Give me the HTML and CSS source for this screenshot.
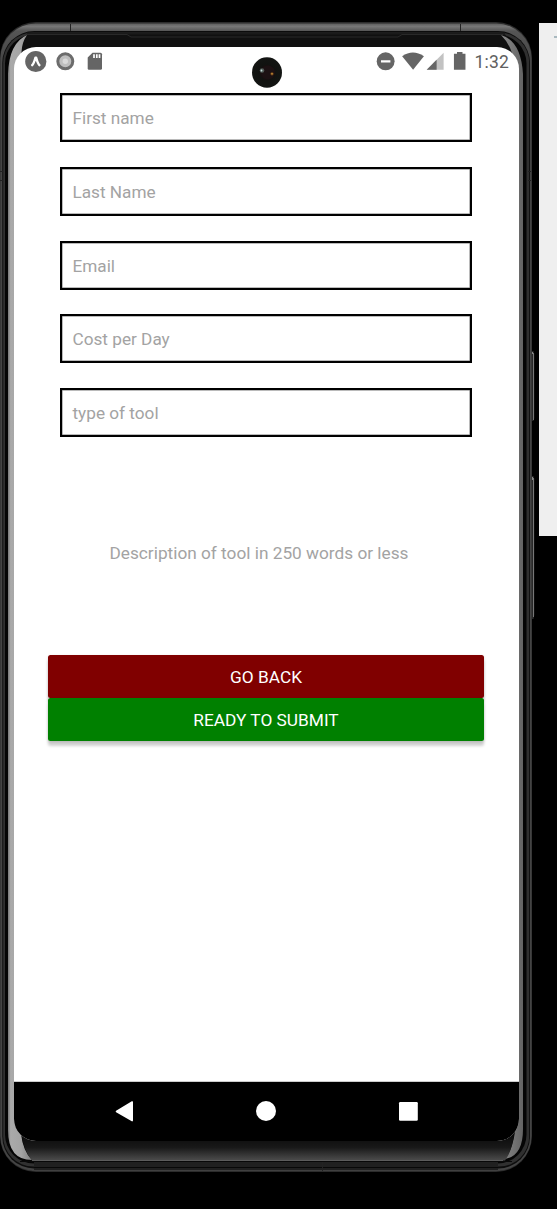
FILE: index.html
```html
<!DOCTYPE html>
<html lang="en">
<head>
<meta charset="utf-8">
<title>Tool listing</title>
<link rel="stylesheet" href="styles.css">
</head>
<body>
<div class="desktop">
  <svg class="bezel" width="557" height="1209" viewBox="0 0 557 1209" aria-hidden="true">
    <defs>
      <linearGradient id="rim" gradientUnits="userSpaceOnUse" x1="0" y1="23" x2="0" y2="90"><stop offset="0" stop-color="#555"/><stop offset=".05" stop-color="#777"/><stop offset=".12" stop-color="#555"/><stop offset=".5" stop-color="#484848"/><stop offset="1" stop-color="#444"/></linearGradient>
      <linearGradient id="chin" x1="0" y1="0" x2="0" y2="1"><stop offset="0" stop-color="#0a0a0a"/><stop offset=".5" stop-color="#181818"/><stop offset="1" stop-color="#4c4c4c"/></linearGradient>
      <linearGradient id="shineL" gradientUnits="userSpaceOnUse" x1="8" y1="0" x2="30" y2="0"><stop offset="0" stop-color="#777"/><stop offset=".12" stop-color="#aaa"/><stop offset=".6" stop-color="#a4a4a4"/><stop offset="1" stop-color="#858585"/></linearGradient>
      <linearGradient id="shineR" gradientUnits="userSpaceOnUse" x1="500" y1="0" x2="523" y2="0"><stop offset="0" stop-color="#8a8a8a"/><stop offset="1" stop-color="#646464"/></linearGradient>
      <radialGradient id="lens"><stop offset="0" stop-color="#2a1518"/><stop offset=".45" stop-color="#171010"/><stop offset=".5" stop-color="#111210"/><stop offset="1" stop-color="#131513"/></radialGradient>
    </defs>
    <path fill="#efefef" d="M539 23h18v513h-18z"/>
    <path fill="#a9b9bf" d="M554 36h3v2h-3z"/>
    <path fill="#282828" d="M531 351h2.500l.8 3v64l-.8 3H531zM531 476h2.500l.8 3v136l-.8 4H531z"/>
    <path fill="none" stroke="#777" d="M533.500 353v67M533.500 478v139"/>
    <path fill="#888" d="M531 352h2v2h-2zM531 477h2v3h-2z"/>
    <rect x="0" y="22" width="532" height="1150" rx="36" fill="#2c2c2c"/>
    <rect x=".5" y="23.500" width="531" height="1147.500" rx="35" fill="url(#rim)"/>
    <rect x="2.300" y="31" width="527.700" height="1137.500" rx="32" fill="#0c0c0c"/>
    <rect x="3.200" y="32.500" width="526" height="1134" rx="30" fill="#303030"/>
    <rect x="5" y="34.500" width="521.500" height="1129" rx="29" fill="#050505"/>
    <path fill="#1a1a1a" d="M27 32.500h478v2H27z"/>
    <path fill="#101010" d="M27 34.500h478q8 7 10 18v10H17V52q2-12 10-17.500z"/>
    <path fill="none" stroke="#292929" d="M27 34.500h100l4 2.500h267l4-2.500h101"/>
    <path fill="url(#shineL)" d="M8 74Q9 43 27 35 22 42 21.500 52L17 66V1120l4 14q2 17 11 26Q8 1160 8 1130z"/>
    <path fill="url(#shineR)" d="M523 74Q521 41 501 35q8 8 11 18l4 13V1120l-1 12q-3 19-10 27 18-3 18-30z"/>
    <path fill="url(#chin)" d="M21.500 1134H514q-2 17-9 26.500H32q-8-9-10.500-26.500z"/>
    <path fill="none" stroke="#5c5c5c" d="M32 1160.500H503"/>
    <path fill="#202020" d="M34 1161H498v9H34z"/>
    <path fill="none" stroke="#080808" d="M20 1161.500H512M34 1167.500H498"/>
    <path fill="none" stroke="#404040" d="M32 1170.500H500"/>
    <path fill="none" stroke="#222" d="M70.500 24v7M460.500 24v7M322.500 1162v9M0 171.500h3M0 180.500h3M528 171.500h3M528 180.500h3"/>
  </svg>
  <main class="screen">
    <header class="status">
      <svg width="80" height="24" viewBox="25 50 80 24" aria-hidden="true">
        <circle cx="35.800" cy="61.500" r="10.600" fill="#656565"/>
        <path d="M32.200 65.200q1.600-1.500 3.200-7.400h.8q1.600 5.900 3.200 7.400" fill="none" stroke="#fff" stroke-width="2.400" stroke-linecap="round" stroke-linejoin="round"/>
        <circle cx="65.300" cy="61.300" r="7.500" fill="#bebebe" stroke="#6c6c6c" stroke-width="3"/>
        <circle cx="65.300" cy="61.300" r="2.700" fill="#d9d9d9"/>
        <path fill="#656565" d="M92.500 52.800h8q1.500 0 1.500 1.500v14q0 1.500-1.500 1.500H89q-1.300 0-1.300-1.500V57.600z"/>
        <path stroke="#fff" stroke-width="1.700" d="M94 54.300v3.700M96.800 54.300v3.700M99.500 54.300v3.700"/>
      </svg>
      <svg class="camera" width="30" height="31" viewBox="0 0 30 31" aria-hidden="true"><ellipse cx="15" cy="15.500" rx="15" ry="15.300" fill="url(#lens)"/><circle cx="16" cy="15.500" r="7" fill="#1c1113"/><circle cx="10" cy="13.500" r="2.300" fill="#525c58"/><circle cx="9.500" cy="13.500" r=".9" fill="#c8e0df"/><circle cx="20" cy="16.800" r="1.600" fill="#744a17"/><circle cx="20" cy="16.800" r=".7" fill="#e0a34b"/></svg>
      <div class="system">
        <svg width="92" height="24" viewBox="376 50 92 24" aria-hidden="true">
          <circle cx="385.700" cy="61.300" r="9" fill="#656565"/><path stroke="#fff" stroke-width="2.200" d="M381 61.300h9.500"/>
          <path fill="#656565" d="M402.300 56.300Q413 48.700 424.200 56.300L413.300 69.800z"/>
          <path fill="#c2c2c2" d="M444 52.800v17h-17z"/><path fill="#656565" d="M437 59.800v10h-10z"/>
          <path fill="#656565" d="M457.500 52h5.500v1.700h3V69.900h-11.600V53.700h3.100z"/>
        </svg>
        <span class="clock">1:32</span>
      </div>
    </header>
    <form class="form">
      <div class="fields">
        <div class="field">First name</div>
        <div class="field">Last Name</div>
        <div class="field">Email</div>
        <div class="field">Cost per Day</div>
        <div class="field">type of tool</div>
      </div>
      <div class="description">Description of tool in 250 words or less</div>
      <div class="actions">
        <button class="button back" type="button">GO BACK</button>
        <button class="button submit" type="button">READY TO SUBMIT</button>
      </div>
    </form>
    <nav class="navbar">
      <svg width="505" height="59" viewBox="14 1082 505 59" aria-hidden="true">
        <path fill="#fff" stroke="#fff" stroke-width="1.600" stroke-linejoin="round" d="M116.500 1111.500L132.200 1102v18.600z"/>
        <circle cx="266" cy="1111" r="10" fill="#fff"/>
        <rect x="399" y="1102" width="18.800" height="18.800" rx="1.200" fill="#fff"/>
      </svg>
    </nav>
  </main>
</div>
</body>
</html>
```
FILE: styles.css
```css
body {
  margin: 0;
  background: #000;
  font-family: Roboto, "Noto Sans", sans-serif;
}
.desktop {
  position: relative;
  box-sizing: border-box;
  width: 557px;
  height: 1209px;
  padding: 47px 38px 68px 14px;
  overflow: hidden;
}
.bezel {
  position: absolute;
  inset: 0;
}
.screen {
  position: relative;
  display: flex;
  flex-direction: column;
  height: 1094px;
  overflow: hidden;
  background: #fff;
  border-radius: 22px;
}
.status {
  position: relative;
  display: flex;
  flex: none;
  justify-content: space-between;
  height: 46.200px;
  box-sizing: border-box;
  padding: 3px 10px 0 11px;
}
.camera {
  position: absolute;
  left: 237.500px;
  top: 10px;
}
.system {
  display: flex;
  width: 133px;
  height: 24px;
  gap: 7px;
}
.clock {
  color: #606060;
  font-size: 17.500px;
  font-weight: 400;
  line-height: 24px;
  letter-spacing: 0.200px;
  white-space: nowrap;
}
.form {
  flex: 1;
}
.fields {
  display: flex;
  flex-direction: column;
  gap: 24.600px;
  padding: 0 47px 0 46px;
}
.field {
  box-sizing: border-box;
  height: 49.100px;
  padding-left: 10.500px;
  border: 2px solid #000;
  box-shadow: inset 0 0 0 0.500px #777;
  color: #a3a3a3;
  font-size: 17.200px;
  line-height: 46px;
}
.description {
  margin: 102.500px 0 0 95.500px;
  color: #a3a3a3;
  font-size: 17.240px;
  line-height: 26px;
  white-space: nowrap;
}
.actions {
  display: flex;
  flex-direction: column;
  margin: 89.500px 35px 0 34px;
}
.button {
  height: 42.900px;
  padding: 2px 0 0;
  border: 0;
  border-radius: 2.500px;
  color: #fff;
  font: 400 17.300px Roboto, "Noto Sans", sans-serif;
  box-shadow: 0 5px 3px rgba(0, 0, 0, 0.18), 0 1px 3px rgba(0, 0, 0, 0.14);
}
.back {
  background: #800000;
}
.submit {
  background: #008000;
}
.navbar {
  flex: none;
  height: 59px;
  border-top: 1px solid #ccc;
  background: #000;
}
```
